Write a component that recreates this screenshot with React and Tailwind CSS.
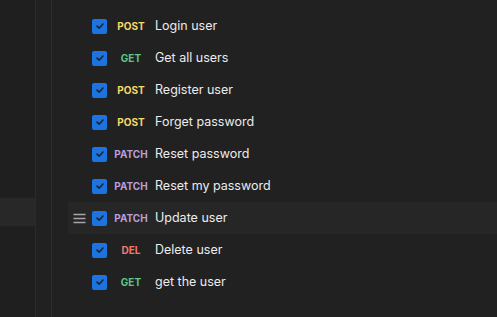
const requests = [
    { method: 'POST', name: 'Login user' },
    { method: 'GET', name: 'Get all users' },
    { method: 'POST', name: 'Register user' },
    { method: 'POST', name: 'Forget password' },
    { method: 'PATCH', name: 'Reset password' },
    { method: 'PATCH', name: 'Reset my password' },
    { method: 'PATCH', name: 'Update user', active: true },
    { method: 'DEL', name: 'Delete user' },
    { method: 'GET', name: 'get the user' },
];

const methodColor = {
    POST: 'text-[#f5d96b]',
    GET: 'text-[#5fc68a]',
    PATCH: 'text-[#b99cdb]',
    DEL: 'text-[#ee7a70]',
};

function Checkbox() {
    return (
        <div className="w-[15px] h-[15px] rounded-[2px] bg-[#1c74e0] flex items-center justify-center shrink-0">
            <svg width="10" height="10" viewBox="0 0 10 10" fill="none">
                <path d="M2 5.2 L4.1 7.2 L8 3" stroke="#1b2230" strokeWidth="1.6" strokeLinecap="round" strokeLinejoin="round" />
            </svg>
        </div>
    );
}

function DragHandle() {
    return (
        <svg width="13" height="11" viewBox="0 0 13 11" fill="none">
            <path d="M0.5 1.5 H12.5 M0.5 5.5 H12.5 M0.5 9.5 H12.5" stroke="#a6a6a6" strokeWidth="1.4" />
        </svg>
    );
}

export default function App() {
    return (
        <div className="w-[497px] h-[317px] flex bg-[#212121] overflow-hidden" style={{ fontFamily: 'Inter, "Noto Sans", sans-serif' }}>
            {/* left sidebar */}
            <div className="w-[36px] shrink-0 bg-[#1f1f1f] border-r border-[#2a2a2a] pt-[198px]">
                <div className="h-[28px] bg-[#282828]" />
            </div>
            <div className="w-[16px] shrink-0 bg-[#212121] border-r border-[#2c2c2c]" />

            {/* request list */}
            <div className="flex-1 pt-[10px] pl-[16px]">
                {requests.map((r, i) => (
                    <div key={i} className={`h-8 flex items-center ${r.active ? 'bg-[#262626]' : ''}`}>
                        <div className="w-[24px] pl-[5px] shrink-0 flex items-center">
                            {r.active && <DragHandle />}
                        </div>
                        <Checkbox />
                        <span className={`w-[42px] ml-[3px] text-center text-[10px] font-bold ${methodColor[r.method]}`}>
                            {r.method}
                        </span>
                        <span className="ml-[3px] text-[12.5px] text-[#ececec]">{r.name}</span>
                    </div>
                ))}
            </div>
        </div>
    );
}
